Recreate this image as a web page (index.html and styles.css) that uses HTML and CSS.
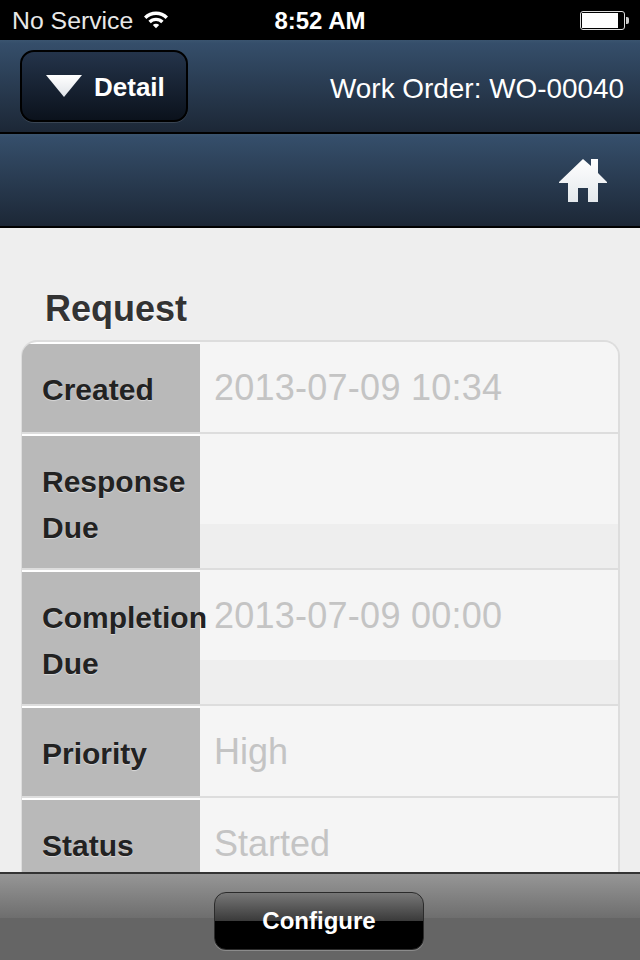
FILE: index.html
```html
<!DOCTYPE html>
<html lang="en">
<head>
    <meta charset="UTF-8">
    <meta name="viewport" content="width=device-width, initial-scale=1.0">
    <title>Work Order Detail</title>
    <link rel="stylesheet" href="styles.css">
</head>
<body>
    <div class="app">
        <div class="status-bar">
            <div class="status-left">
                <span>No Service</span>
                <svg class="wifi" width="26" height="20" viewBox="0 0 26 20">
                    <path d="M1 7.5 A17 17 0 0 1 25 7.5 L22.6 10 A13.6 13.6 0 0 0 3.4 10 Z" fill="#fff"/>
                    <path d="M5.4 11.8 A10.8 10.8 0 0 1 20.6 11.8 L18.2 14.2 A7.4 7.4 0 0 0 7.8 14.2 Z" fill="#fff"/>
                    <path d="M9.8 16 A4.6 4.6 0 0 1 16.2 16 L13 19.2 Z" fill="#fff"/>
                </svg>
            </div>
            <div class="status-time">8:52 AM</div>
            <div class="battery">
                <div class="battery-body"><div class="battery-fill"></div></div>
                <div class="battery-tip"></div>
            </div>
        </div>

        <div class="nav-bar">
            <button class="btn-detail">
                <svg width="36" height="24" viewBox="0 0 36 24">
                    <defs>
                        <linearGradient id="arrowGrad" x1="0" y1="0" x2="0" y2="1">
                            <stop offset="0" stop-color="#fff"/>
                            <stop offset="1" stop-color="#dfe3e8"/>
                        </linearGradient>
                    </defs>
                    <path d="M0 1 H36 L18 23 Z" fill="url(#arrowGrad)"/>
                </svg>
                <span class="btn-detail-text">Detail</span>
            </button>
            <div class="nav-title">Work Order: WO-00040</div>
        </div>

        <div class="nav-bar nav-bar-tools">
            <svg class="home" width="48" height="43" viewBox="0 0 48 43">
                <defs>
                    <linearGradient id="homeGrad" x1="0" y1="0" x2="0" y2="1">
                        <stop offset="0" stop-color="#fff"/>
                        <stop offset="1" stop-color="#e4e8ec"/>
                    </linearGradient>
                </defs>
                <path d="M24 0 L32 7 V0 H39 V14 L48 23 V24 H39 V43 H29 V29 H19 V43 H9 V24 H0 V23 Z" fill="url(#homeGrad)"/>
            </svg>
        </div>

        <div class="content">
            <h2 class="section-title">Request</h2>
            <div class="detail-list">
                <div class="detail-row">
                    <div class="detail-label">Created</div>
                    <div class="detail-value"><div class="value-box date">2013-07-09 10:34</div></div>
                </div>
                <div class="detail-row">
                    <div class="detail-label tall">Response Due</div>
                    <div class="detail-value"><div class="value-box"></div></div>
                </div>
                <div class="detail-row">
                    <div class="detail-label tall">Completion Due</div>
                    <div class="detail-value"><div class="value-box date">2013-07-09 00:00</div></div>
                </div>
                <div class="detail-row">
                    <div class="detail-label">Priority</div>
                    <div class="detail-value"><div class="value-box">High</div></div>
                </div>
                <div class="detail-row">
                    <div class="detail-label">Status</div>
                    <div class="detail-value"><div class="value-box">Started</div></div>
                </div>
            </div>
        </div>

        <div class="footer-bar">
            <button class="btn-configure">Configure</button>
        </div>
    </div>
</body>
</html>
```

FILE: styles.css
```css
:root {
    --page-bg: #eeeeee;
    --row-line: #dddddd;
    --label-bg: #b9b9b9;
    --value-bg: #f5f5f5;
}

* {
    box-sizing: border-box;
}

html, body {
    margin: 0;
    padding: 0;
}

body {
    font-family: "Liberation Sans", Arial, sans-serif;
    background-color: var(--page-bg);
}

.app {
    width: 640px;
    height: 960px;
    display: flex;
    flex-direction: column;
    overflow: hidden;
}

/* status bar */
.status-bar {
    flex: 0 0 40px;
    background-color: #000;
    color: #fff;
    display: grid;
    grid-template-columns: 1fr auto 1fr;
    align-items: center;
    padding: 1px 11px 0 12px;
    font-size: 24px;
}

.status-left {
    display: flex;
    align-items: center;
    gap: 10px;
    color: #e8e8e8;
    font-size: 24.8px;
}

.wifi {
    margin-top: -3px;
}

.status-time {
    font-weight: bold;
    margin-left: -1px;
}

.battery {
    justify-self: end;
    display: flex;
    align-items: center;
    margin-top: -1px;
}

.battery-body {
    width: 45px;
    height: 19px;
    border: 1px solid #ddd;
    border-radius: 3px;
    padding: 1px;
}

.battery-fill {
    width: 36px;
    height: 15px;
    background-color: #fff;
}

.battery-tip {
    width: 3px;
    height: 7px;
    background-color: #ccc;
    border-radius: 0 2px 2px 0;
    margin-left: 1px;
}

/* nav bars */
.nav-bar {
    flex: 0 0 94px;
    display: flex;
    align-items: center;
    justify-content: space-between;
    padding: 0 15px 0 20px;
    background: linear-gradient(to bottom, #3a546f 0, #354e6a 4%, #1c2736 100%);
    border-bottom: 2px solid #000;
    color: #fff;
}

.nav-bar-tools {
    justify-content: flex-end;
    padding-right: 33px;
}

.btn-detail {
    width: 168px;
    height: 72px;
    display: flex;
    align-items: center;
    gap: 12px;
    padding: 0 0 0 24px;
    background: linear-gradient(to bottom, #24344a, #0b121c);
    border: 2px solid #000;
    border-radius: 14px;
    box-shadow: 0 1px 0 rgba(255, 255, 255, 0.12);
    color: #fff;
    font-family: inherit;
    font-size: 26px;
    font-weight: bold;
}

.btn-detail-text {
    padding-top: 2px;
}

.nav-title {
    font-size: 27.9px;
    padding-top: 5px;
    margin-right: 1px;
}

/* content */
.content {
    flex: 1;
    min-height: 0;
    overflow: hidden;
    padding: 60px 20px 0 21px;
}

.section-title {
    margin: 0 0 11px 24px;
    font-size: 36px;
    line-height: 41px;
    font-weight: bold;
    color: #333;
    text-shadow: 0 1px 1px #fff;
}

.detail-list {
    border: 2px solid var(--row-line);
    border-left-width: 1px;
    border-bottom: 0;
    border-radius: 16px 16px 0 0;
    overflow: hidden;
}

.detail-row {
    display: flex;
    border-bottom: 2px solid var(--row-line);
}

.detail-label {
    position: relative;
    z-index: 1;
    flex: 0 0 178px;
    min-width: 0;
    min-height: 90px;
    padding: 23px 0 19px 20px;
    background-color: var(--label-bg);
    border-top: 2px solid #fff;
    color: #222;
    font-size: 30px;
    line-height: 46px;
    font-weight: bold;
    white-space: nowrap;
    text-shadow: 0 1px 1px rgba(255, 255, 255, 0.45);
}

.detail-label.tall {
    white-space: normal;
    height: 134px;
    padding-bottom: 0;
}

.detail-value {
    flex: 1;
    min-width: 0;
}

.value-box {
    height: 90px;
    padding: 25px 0 0 14px;
    background-color: var(--value-bg);
    color: #c4c4c4;
    font-size: 36px;
    line-height: 42px;
}

.value-box.date {
    letter-spacing: 0.25px;
}

/* bottom bar */
.footer-bar {
    flex: 0 0 88px;
    display: flex;
    justify-content: center;
    padding: 18px 2px 0 0;
    background: linear-gradient(to bottom, #969696 0, #6e6e6e 44px, #656565 44px, #656565 100%);
    border-top: 2px solid #333;
}

.btn-configure {
    width: 210px;
    height: 58px;
    padding: 0;
    background: linear-gradient(to bottom, #777 0, #3a3a3a 50%, #000 50%, #000 100%);
    border: 1px solid #2b2b2b;
    border-radius: 12px;
    box-shadow: 0 1px 0 rgba(255, 255, 255, 0.25);
    color: #fff;
    font-family: inherit;
    font-size: 24px;
    font-weight: bold;
}
```
